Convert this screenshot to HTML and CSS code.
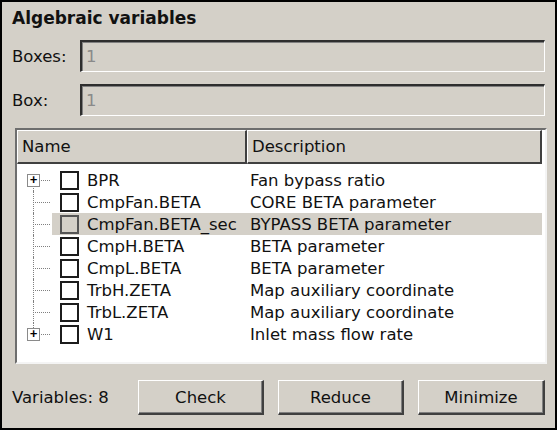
FILE: index.html
```html
<!DOCTYPE html>
<html>
<head>
<meta charset="utf-8">
<link rel="stylesheet" href="styles.css">
</head>
<body>
<div class="window">
  <div class="title">Algebraic variables</div>
  <div class="field-row">
    <span class="label">Boxes:</span>
    <div class="field">1</div>
  </div>
  <div class="field-row">
    <span class="label">Box:</span>
    <div class="field">1</div>
  </div>
  <div class="tree">
    <div class="header">
      <div class="hcell name-h">Name</div>
      <div class="hcell desc-h">Description</div>
    </div>
    <div class="rows">
      <div class="row first">
        <div class="lines"><span class="expander">+</span></div>
        <div class="item"><span class="check"></span><span class="name">BPR</span><span class="desc">Fan bypass ratio</span></div>
      </div>
      <div class="row mid">
        <div class="lines"></div>
        <div class="item"><span class="check"></span><span class="name">CmpFan.BETA</span><span class="desc">CORE BETA parameter</span></div>
      </div>
      <div class="row mid">
        <div class="lines"></div>
        <div class="item selected"><span class="check"></span><span class="name">CmpFan.BETA_sec</span><span class="desc">BYPASS BETA parameter</span></div>
      </div>
      <div class="row mid">
        <div class="lines"></div>
        <div class="item"><span class="check"></span><span class="name">CmpH.BETA</span><span class="desc">BETA parameter</span></div>
      </div>
      <div class="row mid">
        <div class="lines"></div>
        <div class="item"><span class="check"></span><span class="name">CmpL.BETA</span><span class="desc">BETA parameter</span></div>
      </div>
      <div class="row mid">
        <div class="lines"></div>
        <div class="item"><span class="check"></span><span class="name">TrbH.ZETA</span><span class="desc">Map auxiliary coordinate</span></div>
      </div>
      <div class="row mid">
        <div class="lines"></div>
        <div class="item"><span class="check"></span><span class="name">TrbL.ZETA</span><span class="desc">Map auxiliary coordinate</span></div>
      </div>
      <div class="row last">
        <div class="lines"><span class="expander">+</span></div>
        <div class="item"><span class="check"></span><span class="name">W1</span><span class="desc">Inlet mass flow rate</span></div>
      </div>
    </div>
  </div>
  <div class="bottom">
    <span class="count">Variables: 8</span>
    <button class="btn">Check</button>
    <button class="btn">Reduce</button>
    <button class="btn">Minimize</button>
  </div>
</div>
</body>
</html>
```
FILE: styles.css
```css
html, body {
  margin: 0;
  padding: 0;
  background: #d4d0c8;
}
.window {
  width: 557px;
  height: 430px;
  box-sizing: border-box;
  border: 2px solid #000;
  background: #d4d0c8;
  padding: 6px 10px 0 10px;
  display: flex;
  flex-direction: column;
  font-family: "DejaVu Sans", Verdana, sans-serif;
  font-size: 16.5px;
  color: #111;
}
.title {
  font-weight: bold;
  font-size: 17px;
  line-height: 20px;
  height: 20px;
}
.field-row {
  display: flex;
  align-items: center;
  height: 32px;
  margin-top: 12px;
}
.label {
  width: 68px;
  flex: none;
}
.field {
  flex: 1;
  height: 32px;
  box-sizing: border-box;
  border-style: solid;
  border-width: 2px 1px 1px 2px;
  border-color: #2e2e2e #ffffff #ffffff #2e2e2e;
  box-shadow: inset 1px 1px 0 #808080;
  color: #8a8a8a;
  padding-left: 4px;
  display: flex;
  align-items: center;
}
.tree {
  margin: 12px -2px 0 3px;
  height: 236px;
  box-sizing: border-box;
  border-style: solid;
  border-width: 2px;
  border-color: #6e6e6e #f4f4f4 #f4f4f4 #6e6e6e;
  background: #fff;
  display: flex;
  flex-direction: column;
}
.header {
  display: flex;
  height: 34px;
  flex: none;
  margin-right: 3px;
}
.hcell {
  box-sizing: border-box;
  background: #d4d0c8;
  border-style: solid;
  border-width: 1px 2px 2px 1px;
  border-color: #ffffff #404040 #404040 #ffffff;
  display: flex;
  align-items: center;
  padding-left: 4px;
}
.name-h { width: 230px; }
.desc-h { flex: 1; }
.rows {
  padding-top: 5px;
  margin-right: 3px;
  display: flex;
  flex-direction: column;
}
.row {
  display: flex;
  height: 22px;
}
.lines {
  width: 35px;
  flex: none;
  position: relative;
}
.lines::before {
  content: "";
  position: absolute;
  left: 16px;
  top: 0;
  bottom: 0;
  border-left: 1px dotted #808080;
}
.first .lines::before { top: 11px; }
.last .lines::before { bottom: 11px; }
.lines::after {
  content: "";
  position: absolute;
  left: 18px;
  width: 15px;
  top: 11px;
  border-top: 1px dotted #808080;
}
.expander {
  position: absolute;
  left: 10px;
  top: 5px;
  width: 11px;
  height: 11px;
  border: 1px solid #8a8a8a;
  background: #fff;
  z-index: 1;
  font-family: "DejaVu Sans Mono", monospace;
  font-weight: bold;
  font-size: 12px;
  line-height: 11px;
  text-align: center;
  color: #000;
}
.item {
  flex: 1;
  display: flex;
  align-items: center;
}
.item.selected {
  background: #d4d0c8;
}
.check {
  width: 15px;
  height: 15px;
  border: 2px solid #1c1c1c;
  background: #fff;
  margin-left: 8px;
  flex: none;
}
.selected .check {
  background: transparent;
  border-color: #555;
}
.name {
  width: 163px;
  margin-left: 8px;
  white-space: nowrap;
  flex: none;
}
.desc {
  white-space: nowrap;
}
.bottom {
  margin-top: 16px;
  display: grid;
  grid-template-columns: 1fr 126px 126px 127px;
  column-gap: 14px;
  align-items: center;
}
.count {
  white-space: nowrap;
}
.btn {
  height: 35px;
  box-sizing: border-box;
  font-family: "DejaVu Sans", Verdana, sans-serif;
  font-size: 16.5px;
  color: #111;
  background: #d4d0c8;
  border-style: solid;
  border-width: 1px 2px 2px 1px;
  border-color: #ffffff #404040 #404040 #ffffff;
  box-shadow: inset -1px -1px 0 #808080;
  padding: 0;
}
```
